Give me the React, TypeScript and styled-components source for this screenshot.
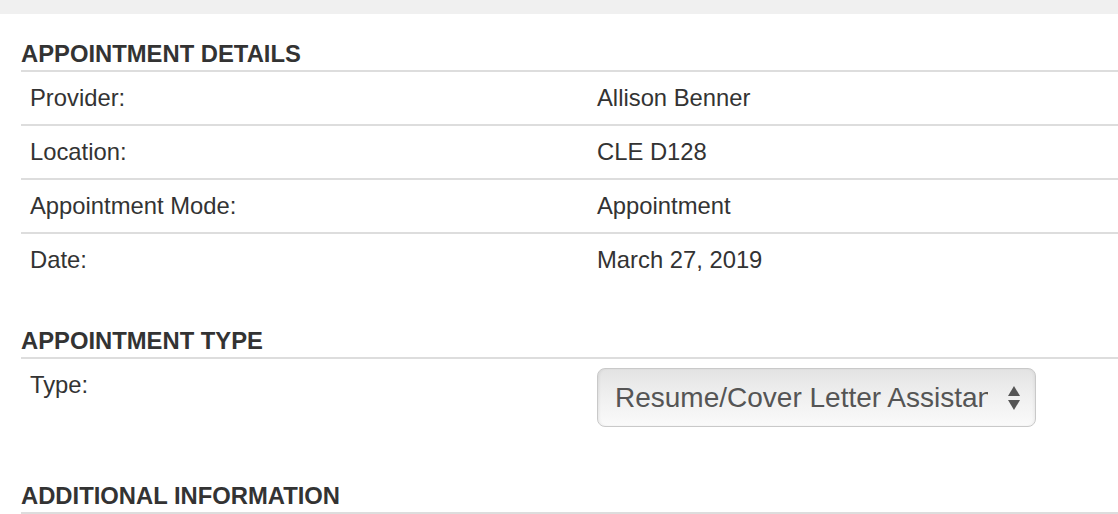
import React from "react";
import styled, { createGlobalStyle } from "styled-components";

const GlobalStyle = createGlobalStyle`
  html, body {
    margin: 0;
    padding: 0;
    background: #ffffff;
  }
  body {
    font-family: "Liberation Sans", Arial, Helvetica, sans-serif;
    color: #333333;
    overflow: hidden;
  }
`;

const TopBar = styled.div`
  height: 14px;
  background: #f0f0f0;
`;

const Page = styled.div`
  padding: 26px 0 0 21px;
`;

const Section = styled.section`
  margin-bottom: 41px;

  &:last-child {
    margin-bottom: 0;
  }
`;

const SectionTitle = styled.h2`
  margin: 0;
  font-size: 23.8px;
  line-height: 28px;
  font-weight: 700;
  color: #333333;
  padding-bottom: 2px;
  border-bottom: 2px solid #dddddd;
`;

const Row = styled.div<{ $last?: boolean; $tall?: boolean }>`
  display: grid;
  grid-template-columns: 576px 1fr;
  align-items: ${(p) => (p.$tall ? "start" : "center")};
  min-height: 52px;
  padding: ${(p) => (p.$tall ? "9px 0 14px" : "0")};
  border-bottom: ${(p) => (p.$last ? "none" : "2px solid #dddddd")};
  font-size: 23.8px;
`;

const Label = styled.div<{ $offset?: boolean }>`
  padding-left: 9px;
  line-height: 52px;
  margin-top: ${(p) => (p.$offset ? "-9px" : "0")};
`;

const Value = styled.div`
  line-height: 52px;
`;

const SelectBox = styled.div`
  width: 437px;
  height: 57px;
  box-sizing: content-box;
  border: 1px solid #c9c9c9;
  border-radius: 8px;
  background: linear-gradient(to bottom, #e3e3e3 0%, #efefef 45%, #fafafa 100%);
  box-shadow: inset 2px 0 3px -1px rgba(0, 0, 0, 0.08),
    inset -2px 0 3px -1px rgba(0, 0, 0, 0.06);
  display: flex;
  align-items: center;
`;

const SelectText = styled.span`
  width: 373px;
  margin-left: 17px;
  overflow: hidden;
  white-space: nowrap;
  font-size: 28px;
  color: #555555;
`;

const Arrows = styled.svg`
  margin-left: auto;
  margin-right: 14px;
  flex: none;
`;

const details = [
  { label: "Provider:", value: "Allison Benner" },
  { label: "Location:", value: "CLE D128" },
  { label: "Appointment Mode:", value: "Appointment" },
  { label: "Date:", value: "March 27, 2019" },
];

export default function App() {
  return (
    <>
      <GlobalStyle />
      <TopBar />
      <Page>
        <Section>
          <SectionTitle>APPOINTMENT DETAILS</SectionTitle>
          {details.map((d, i) => (
            <Row key={d.label} $last={i === details.length - 1}>
              <Label>{d.label}</Label>
              <Value>{d.value}</Value>
            </Row>
          ))}
        </Section>
        <Section>
          <SectionTitle>APPOINTMENT TYPE</SectionTitle>
          <Row $last $tall>
            <Label $offset>Type:</Label>
            <SelectBox>
              <SelectText>Resume/Cover Letter Assistance</SelectText>
              <Arrows width="14" height="26" viewBox="0 0 14 26">
                <polygon points="7,1 13,11 1,11" fill="#555" />
                <polygon points="1,15 13,15 7,25" fill="#555" />
              </Arrows>
            </SelectBox>
          </Row>
        </Section>
        <Section>
          <SectionTitle>ADDITIONAL INFORMATION</SectionTitle>
        </Section>
      </Page>
    </>
  );
}
